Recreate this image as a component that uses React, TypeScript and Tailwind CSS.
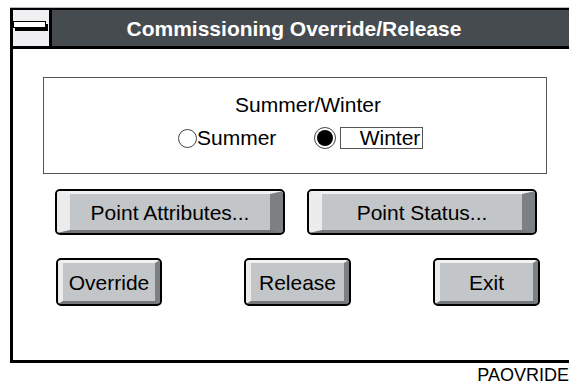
import type { ReactNode } from 'react';

type BevelProps = {
  children: ReactNode;
  className?: string;
  wide?: boolean;
};

function BevelButton({ children, className, wide }: BevelProps) {
  return (
    <div className={`rounded-[5px] border-2 border-black bg-black ${className ?? ''}`}>
      <div
        className={
          wide
            ? 'flex h-full items-center justify-center rounded-[3px] border-t-[3px] border-r-[13px] border-b-[3px] border-l-[13px] border-t-[#f2f2f2] border-r-[#7c8083] border-b-[#73777a] border-l-[#ececec] bg-[#c3c6c8]'
            : 'flex h-full items-center justify-center rounded-[3px] border-t-[3px] border-r-[5px] border-b-[3px] border-l-[5px] border-t-[#f2f2f2] border-r-[#7c8083] border-b-[#73777a] border-l-[#ececec] bg-[#c3c6c8]'
        }
      >
        <span className="text-[21px] leading-none text-black">{children}</span>
      </div>
    </div>
  );
}

export default function App() {
  return (
    <div className="h-[385px] w-[569px] overflow-hidden bg-white font-['Liberation_Sans',Arial,sans-serif]">
      <div className="ml-[10px] w-[566px] pt-[7px]">
        <div className="border-t border-[#b8b8b8]" />
        <div className="flex h-[355px] flex-col border-b-[3px] border-l-[3px] border-black">
          {/* title bar */}
          <div className="flex h-[41px] border-t-2 border-b-[3px] border-black bg-[#464b50]">
            <div className="w-[36px] bg-[#f0f0f2]">
              <svg width="36" height="36" viewBox="0 0 36 36">
                <rect x="2" y="14" width="33" height="7" fill="#000" />
                <rect x="0.5" y="11.5" width="32" height="6" fill="#fff" stroke="#000" />
              </svg>
            </div>
            <div className="w-[3px] bg-black" />
            <div className="flex flex-1 items-center justify-center pr-[40px]">
              <span className="text-[21px] leading-none font-bold text-white">
                Commissioning Override/Release
              </span>
            </div>
          </div>

          {/* body */}
          <div className="flex flex-1 flex-col px-[30px] pt-[28px]">
            <div className="flex h-[97px] w-[504px] flex-col border border-[#555]">
              <div className="mt-[16px] flex justify-center pl-[26px] text-[21px] leading-[22px] text-black">
                Summer/Winter
              </div>
              <div className="mt-[11px] flex items-center pl-[134px]">
                <span className="h-[19px] w-[19px] rounded-full border border-[#444] bg-white" />
                <span className="text-[21px] leading-[22px] text-black">Summer</span>
                <span className="ml-[38px] flex h-[22px] w-[22px] items-center justify-center rounded-full border border-[#444] bg-white">
                  <span className="h-[16px] w-[16px] rounded-full bg-black" />
                </span>
                <span className="ml-[4px] flex h-[22px] w-[83px] items-center justify-end border border-[#555] pr-[2px] text-[21px] leading-[20px] text-black">
                  Winter
                </span>
              </div>
            </div>

            <div className="mt-[15px] flex gap-[22px] pl-[12px]">
              <BevelButton wide className="h-[46px] w-[230px]">Point Attributes...</BevelButton>
              <BevelButton wide className="h-[46px] w-[230px]">Point Status...</BevelButton>
            </div>

            <div className="mt-[23px] flex justify-between pl-[13px] pr-[6px]">
              <BevelButton className="h-[48px] w-[106px]">Override</BevelButton>
              <BevelButton className="h-[48px] w-[107px]">Release</BevelButton>
              <BevelButton className="h-[48px] w-[107px]">Exit</BevelButton>
            </div>
          </div>
        </div>
      </div>
      <div className="flex justify-end pt-[3px]">
        <span className="text-[18px] leading-none text-black">PAOVRIDE</span>
      </div>
    </div>
  );
}
